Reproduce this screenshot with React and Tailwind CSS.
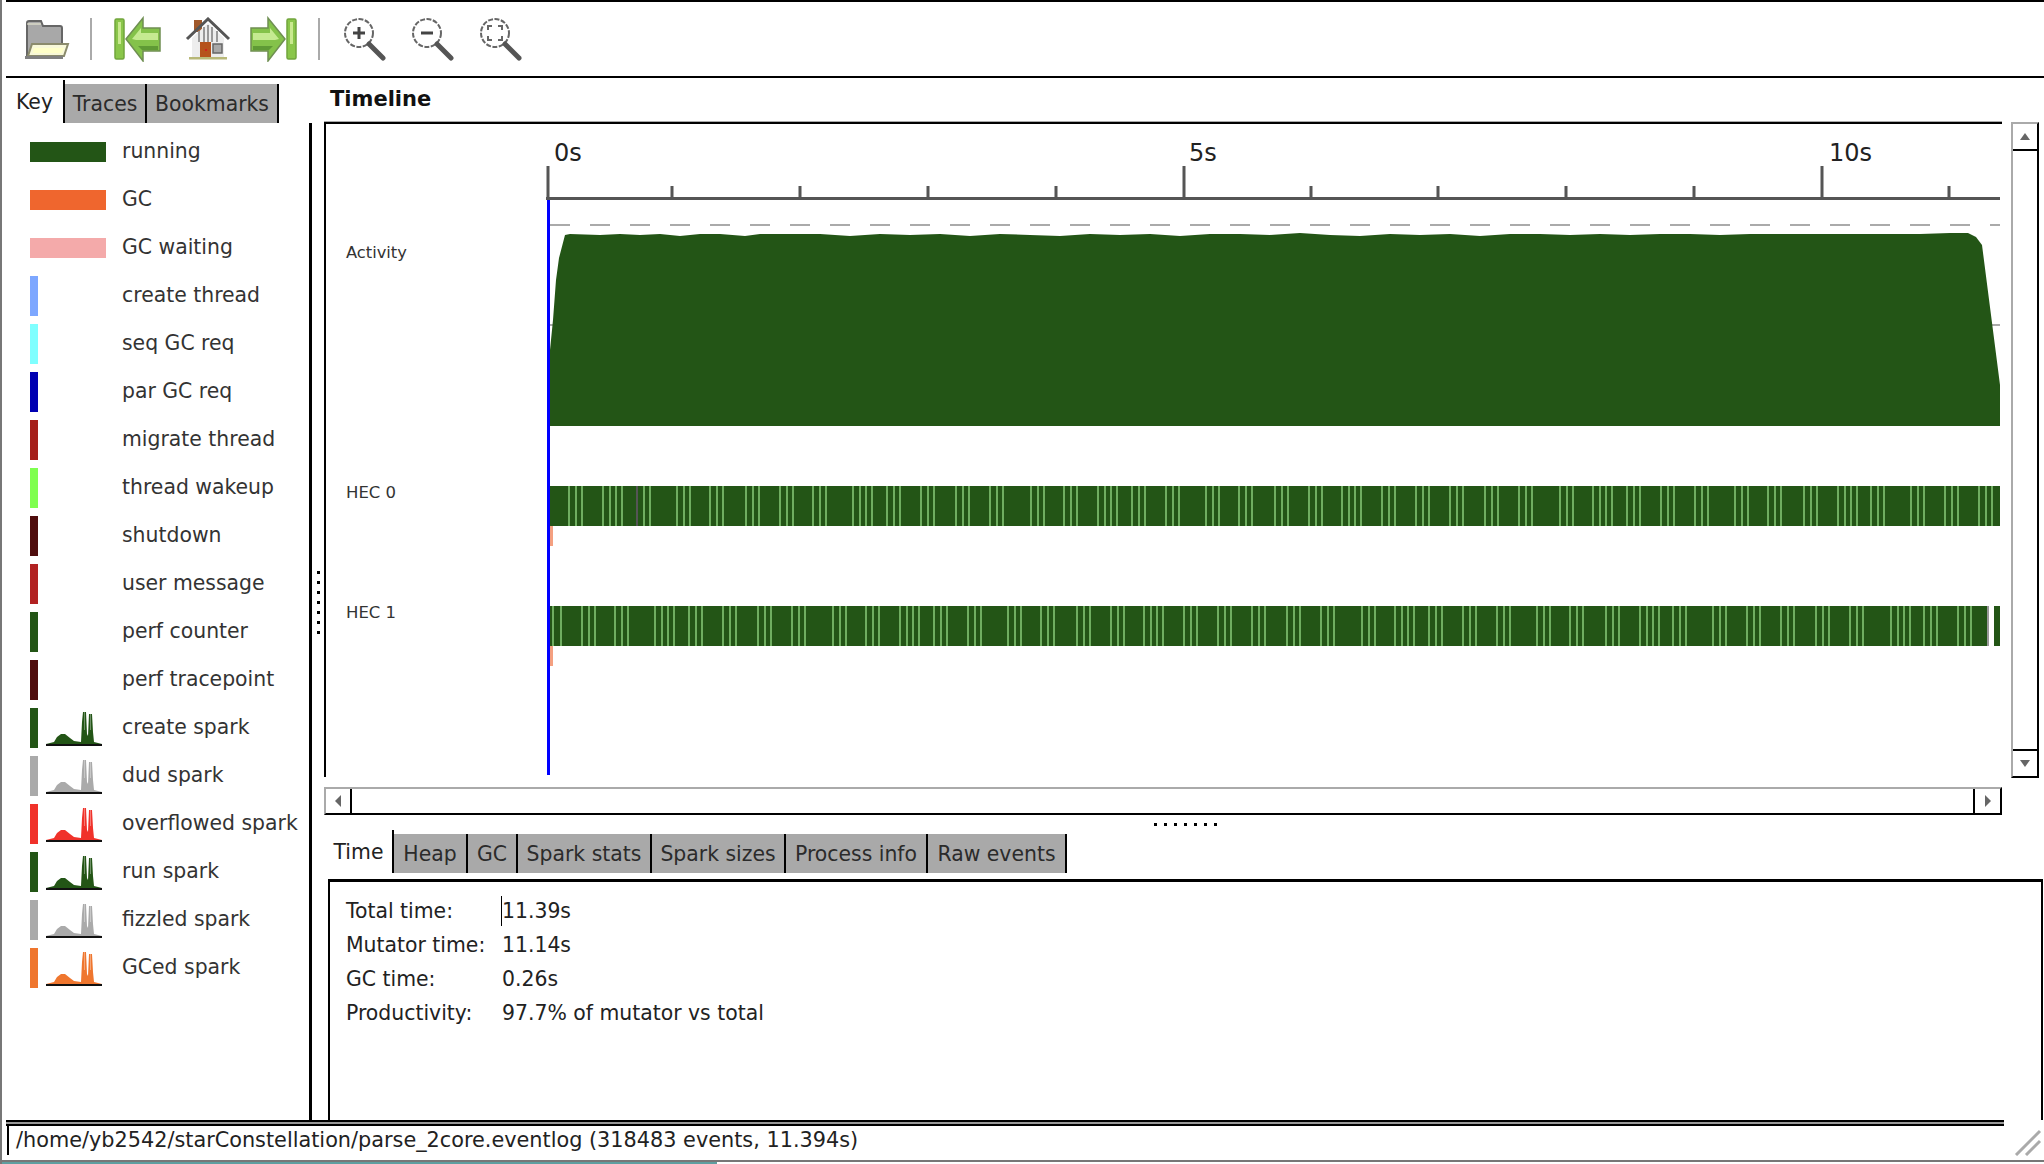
import React from 'react';

const FONT = { fontFamily: '"DejaVu Sans", sans-serif' };

const keyRows = [
  { label: 'running', color: '#235516', wide: true },
  { label: 'GC', color: '#ef662e', wide: true },
  { label: 'GC waiting', color: '#f4aaaa', wide: true },
  { label: 'create thread', color: '#7da7ff' },
  { label: 'seq GC req', color: '#7fffff' },
  { label: 'par GC req', color: '#0000b2' },
  { label: 'migrate thread', color: '#a51f1a' },
  { label: 'thread wakeup', color: '#7fff4f' },
  { label: 'shutdown', color: '#4f0d0d' },
  { label: 'user message', color: '#b22222' },
  { label: 'perf counter', color: '#235516' },
  { label: 'perf tracepoint', color: '#4f0d0d' },
  { label: 'create spark', color: '#235516', spark: true },
  { label: 'dud spark', color: '#aaaaaa', spark: true },
  { label: 'overflowed spark', color: '#f0322a', spark: true },
  { label: 'run spark', color: '#235516', spark: true },
  { label: 'fizzled spark', color: '#aaaaaa', spark: true },
  { label: 'GCed spark', color: '#ef762e', spark: true },
];

const detailTabs = [
  { label: 'Heap', width: 'w-[74px]' },
  { label: 'GC', width: 'w-[50px]' },
  { label: 'Spark stats', width: 'w-[134px]' },
  { label: 'Spark sizes', width: 'w-[134px]' },
  { label: 'Process info', width: 'w-[142px]' },
  { label: 'Raw events', width: 'w-[139px]' },
];

const stats = [
  ['Total time:', '11.39s'],
  ['Mutator time:', '11.14s'],
  ['GC time:', '0.26s'],
  ['Productivity:', '97.7% of mutator vs total'],
];

const minorTicks = [672, 800, 928, 1056, 1311, 1438, 1566, 1694, 1949];
const majorTicks = [548, 1184, 1822];

const gapCycle = [34, 34, 40, 33, 36, 34, 33, 40, 34, 34, 35, 34, 41, 33, 34];

// the GC pauses show up as little groups of light stripes along each HEC bar
const stripeGroups = (first, seed) => {
  const out = [];
  let x = first;
  let i = seed;
  while (x < 1998) {
    out.push(x, x + 7, x + 13);
    if (i % 7 === 1) out.push(x + 19);
    x += gapCycle[i % gapCycle.length];
    i += 1;
  }
  return out.filter((pos) => pos < 1998);
};

const hec0Stripes = stripeGroups(568, 0);
const hec1Stripes = [552, 560, ...stripeGroups(581, 6)];

const ActivityShape =
  'M550 426 L550 350 L553 320 L556 280 L559 258 L565 235 L570 234 L600 235 L620 234 L640 235 L660 234 L680 236 L700 234 L720 234 L745 236 L760 234 L790 234 L820 234 L850 236 L880 234 L910 235 L940 234 L970 236 L1000 234 L1030 235 L1060 236 L1090 234 L1120 235 L1150 234 L1180 236 L1210 234 L1240 234 L1270 235 L1300 233 L1330 235 L1360 236 L1390 234 L1420 235 L1450 234 L1480 236 L1510 234 L1540 234 L1570 235 L1600 234 L1630 235 L1660 234 L1690 234 L1720 235 L1750 234 L1780 234 L1810 234 L1840 234 L1880 234 L1920 234 L1950 233 L1968 233 L1976 237 L1982 245 L2000 385 L2000 426 Z';

const Tab = ({ label, active, width }) => (
  <div
    className={`${width} flex justify-center border-r-2 border-black text-[20.4px] ${
      active ? 'h-[43px] items-start pt-[7px] text-[#222]' : 'mt-[4px] h-[39px] items-center bg-[#a9a9a9] pt-[2px] text-[#2b2b2b]'
    }`}
  >
    {label}
  </div>
);

const Spark = ({ color }) => (
  <svg width="56" height="36" viewBox="0 0 56 36" className="ml-[8px]">
    <path
      d="M0 34 L8 32 L11 27 L15 24 L19 24 L24 28 L28 31 L35 32 L36 12 L37 2 L40 2 L41 24 L42 26 L43 4 L46 4 L47 22 L48 32 L56 34 Z"
      fill={color}
    />
    <path d="M38 2 L39 2 L39 20 L38 20 Z M44 4 L45 4 L45 20 L44 20 Z" fill="#ffffff" fillOpacity="0.35" />
    <rect x="0" y="34" width="56" height="2" fill="#111" />
  </svg>
);

const KeyRow = ({ label, color, wide, spark }) => (
  <div className="flex h-[40px] items-center">
    <div className="flex w-[92px] items-center">
      {wide ? (
        <div className="h-[20px] w-[76px]" style={{ backgroundColor: color }} />
      ) : (
        <div className="h-[40px] w-[8px]" style={{ backgroundColor: color }} />
      )}
      {spark && <Spark color={color} />}
    </div>
    <span className="whitespace-nowrap pb-[2px] text-[20.4px] leading-none text-[#333]">{label}</span>
  </div>
);

const FolderIcon = () => (
  <svg width="46" height="42" viewBox="0 0 46 42">
    <path d="M3 39 V5 Q3 3 5 3 H17 L19 8 H36 Q38 8 38 10 V39 Z" fill="#a8a8a8" stroke="#666" strokeWidth="2" />
    <path d="M3 6 H17" stroke="#f2f2d8" strokeWidth="1" />
    <path d="M8 26 H44 L40 38 H4 Z" fill="#f8f8d8" stroke="#8b8b6c" strokeWidth="2" />
    <path d="M10 30 H40 L38 35 H9 Z" fill="#ffffc8" />
    <rect x="1" y="38" width="38" height="3" fill="#808080" />
  </svg>
);

const ArrowIcon = ({ flip }) => (
  <svg width="48" height="46" viewBox="0 0 48 46" className={flip ? '-scale-x-100' : ''}>
    <rect x="1" y="3" width="9" height="40" rx="1.5" fill="#8ac64a" stroke="#71a53c" strokeWidth="1.5" />
    <rect x="4" y="6" width="3" height="22" fill="#c9e98f" />
    <path d="M12 23 L29 2 V12 H46 V35 H29 V45 Z" fill="#84c24a" stroke="#6f8f52" strokeWidth="1.5" />
    <path d="M18 23 L27 12 V17 H44 V24 H22 Z" fill="#c5ea91" />
    <path d="M24 30 H44 V34 H28 Z" fill="#5f9a35" />
  </svg>
);

const HomeIcon = () => (
  <svg width="46" height="44" viewBox="0 0 46 44">
    <rect x="9" y="3" width="8" height="12" fill="#a0582a" />
    <path d="M7 21 L23 6 L39 21 V40 H7 Z" fill="#ededed" />
    <path d="M2 22 L23 2 L44 22" fill="none" stroke="#555" strokeWidth="3" />
    <path d="M14 14 V25 M19 10 V25 M23 8 V25 M27 10 V25 M32 14 V25" stroke="#999" strokeWidth="2" />
    <rect x="15" y="25" width="11" height="16" fill="#b5521c" />
    <rect x="20" y="32" width="2" height="2" fill="#d02020" />
    <rect x="28" y="27" width="9" height="9" fill="#a8a8a8" stroke="#666" strokeWidth="1.5" />
    <rect x="4" y="40" width="38" height="2.5" fill="#b8b878" />
  </svg>
);

const LensIcon = ({ kind }) => (
  <svg width="44" height="44" viewBox="0 0 44 44">
    <circle cx="16" cy="16" r="14" fill="#fff" stroke="#666" strokeWidth="2" strokeDasharray="5 1.5" />
    <path d="M26 27 L40 41" stroke="#555" strokeWidth="5" strokeLinecap="round" />
    {kind === 'in' && <path d="M10 16 H22 M16 10 V22" stroke="#444" strokeWidth="3" />}
    {kind === 'out' && <path d="M10 16 H22" stroke="#444" strokeWidth="3" />}
    {kind === 'fit' && (
      <path d="M9 13 V9 H13 M19 9 H23 V13 M23 19 V23 H19 M13 23 H9 V19" fill="none" stroke="#666" strokeWidth="2" />
    )}
  </svg>
);

const Timeline = () => (
  <svg width="1676" height="653" viewBox="326 124 1676 653" className="block" style={FONT}>
    {/* axis */}
    <rect x="546" y="197" width="1454" height="3" fill="#555" />
    {majorTicks.map((x) => (
      <rect key={x} x={x - 1.5} y="166" width="3" height="32" fill="#555" />
    ))}
    {minorTicks.map((x) => (
      <rect key={x} x={x - 1.5} y="186" width="3" height="12" fill="#555" />
    ))}
    <text x="554" y="161" fontSize="24" fill="#222">0s</text>
    <text x="1189" y="161" fontSize="24" fill="#222">5s</text>
    <text x="1829" y="161" fontSize="24" fill="#222">10s</text>

    {/* activity */}
    <path d="M550 225 H2000" stroke="#aaa" strokeWidth="2" strokeDasharray="20 20" />
    <path d="M550 325 H556 M1992 325 H2000" stroke="#aaa" strokeWidth="2" />
    <path d={ActivityShape} fill="#235516" />
    <text x="346" y="258" fontSize="16.3" fill="#333">Activity</text>

    {/* HEC bars */}
    <text x="346" y="498" fontSize="16.5" fill="#333">HEC 0</text>
    <rect x="550" y="486" width="1450" height="40" fill="#235516" />
    {hec0Stripes.map((x, i) => (
      <rect key={i} x={x} y="486" width="2" height="40" fill="#6fae60" />
    ))}
    <rect x="636" y="486" width="2" height="40" fill="#555" />
    <rect x="550" y="526" width="3" height="20" fill="#f4a080" />

    <text x="346" y="618" fontSize="16.5" fill="#333">HEC 1</text>
    <rect x="550" y="606" width="1450" height="40" fill="#235516" />
    {hec1Stripes.map((x, i) => (
      <rect key={i} x={x} y="606" width="2" height="40" fill="#6fae60" />
    ))}
    <rect x="1988" y="606" width="6" height="40" fill="#fff" />
    <rect x="1987" y="606" width="2" height="40" fill="#999" />
    <rect x="550" y="646" width="3" height="20" fill="#f4a080" />

    <rect x="547" y="200" width="3" height="575" fill="#0000ff" />
  </svg>
);

const ArrowButton = ({ dir, className }) => {
  const points = {
    up: '7,11 17,11 12,4',
    down: '7,4 17,4 12,11',
    left: '9,8 15,2 15,14',
    right: '15,8 9,2 9,14',
  };
  return (
    <div className={`flex items-center justify-center bg-white ${className}`}>
      <svg width="24" height="16" viewBox="0 0 24 16">
        <polygon points={points[dir]} fill="#666" />
      </svg>
    </div>
  );
};

const App = () => (
  <div className="flex h-[1164px] w-[2044px] flex-col overflow-hidden border-l-2 border-[#777] bg-white" style={FONT}>
    {/* toolbar */}
    <div className="ml-[4px] flex h-[78px] shrink-0 items-center border-y-2 border-black">
      <div className="ml-[18px]"><FolderIcon /></div>
      <div className="ml-[20px] h-[42px] w-[2px] bg-[#aaa]" />
      <div className="ml-[22px]"><ArrowIcon /></div>
      <div className="ml-[23px]"><HomeIcon /></div>
      <div className="ml-[18px]"><ArrowIcon flip /></div>
      <div className="ml-[21px] h-[42px] w-[2px] bg-[#aaa]" />
      <div className="ml-[23px]"><LensIcon kind="in" /></div>
      <div className="ml-[24px]"><LensIcon kind="out" /></div>
      <div className="ml-[24px]"><LensIcon kind="fit" /></div>
    </div>

    <div className="flex min-h-0 flex-1">
      {/* key pane */}
      <div className="flex w-[310px] shrink-0 flex-col">
        <div className="ml-[4px] flex h-[45px] shrink-0 pt-[2px]">
          <Tab label="Key" active width="w-[59px]" />
          <Tab label="Traces" width="w-[82px]" />
          <Tab label="Bookmarks" width="w-[132px]" />
        </div>
        <div className="flex-1 border-r-[3px] border-black pl-[28px] pt-[9px]">
          {keyRows.map((row) => (
            <div key={row.label} className="mb-[8px]">
              <KeyRow {...row} />
            </div>
          ))}
        </div>
      </div>

      {/* pane handle */}
      <div className="flex w-[12px] shrink-0 flex-col items-center gap-[7px] pt-[493px]">
        {[0, 1, 2, 3, 4, 5, 6].map((n) => (
          <span key={n} className="h-[3px] w-[3px] bg-black" />
        ))}
      </div>

      {/* timeline and details */}
      <div className="flex min-w-0 flex-1 flex-col">
        <div className="flex h-[44px] shrink-0 items-center pl-[6px] text-[21px] font-bold text-[#111]">Timeline</div>
        <div className="flex h-[655px] shrink-0 gap-[9px]">
          <div className="h-[655px] w-[1678px] border-l-2 border-t-2 border-black shadow-[0_-1px_0_#aaa]">
            <Timeline />
          </div>
          <div className="flex h-[656px] w-[28px] flex-col justify-between border-y-2 border-l-2 border-r-2 border-b-black border-l-[#aaa] border-r-black border-t-[#aaa]">
            <ArrowButton dir="up" className="h-[27px] border-b-2 border-black" />
            <ArrowButton dir="down" className="h-[27px] border-t-2 border-black" />
          </div>
        </div>
        <div className="mt-[10px] flex h-[28px] w-[1678px] shrink-0 justify-between border-y-2 border-l-2 border-r-2 border-b-black border-l-[#aaa] border-r-black border-t-[#aaa]">
          <ArrowButton dir="left" className="w-[26px] border-r-2 border-black" />
          <ArrowButton dir="right" className="w-[27px] border-l-2 border-black" />
        </div>
        <div className="flex h-[19px] shrink-0 items-center gap-[7px] pl-[830px]">
          {[0, 1, 2, 3, 4, 5, 6].map((n) => (
            <span key={n} className="h-[3px] w-[3px] bg-black" />
          ))}
        </div>
        <div className="-mt-[4px] ml-[1px] flex h-[43px] shrink-0">
          <Tab label="Time" active width="w-[69px]" />
          {detailTabs.map((tab) => (
            <Tab key={tab.label} label={tab.label} width={tab.width} />
          ))}
        </div>
        <div className="ml-[4px] mr-[1px] mt-[6px] flex-1 border-x-2 border-t-[3px] border-black pl-[16px] pt-[12px] text-[20.4px] text-[#222]">
          {stats.map(([name, value], i) => (
            <div key={name} className="flex h-[34.2px] items-center whitespace-nowrap">
              <span className="w-[156px]">{name}</span>
              <span className={i === 0 ? '-ml-[1px] border-l-[1px] border-black' : ''}>{value}</span>
            </div>
          ))}
        </div>
      </div>
    </div>

    {/* status bar */}
    <div className="flex h-[44px] shrink-0 flex-col">
      <div className="ml-[4px] h-[6px] w-[1998px] shrink-0 border-y-2 border-black bg-[#999]" />
      <div className="flex flex-1 items-start justify-between">
        <div className="ml-[5px] flex h-[29px] items-center whitespace-nowrap border-l-2 border-black pl-[7px] text-[20.8px] text-[#222]">
          /home/yb2542/starConstellation/parse_2core.eventlog (318483 events, 11.394s)
        </div>
        <svg width="28" height="28" viewBox="0 0 28 28" className="mr-[2px] mt-[2px]">
          <path d="M2 27 L26 3 M12 27 L26 13" stroke="#aaa" strokeWidth="3" />
        </svg>
      </div>
      <div className="h-[2px] shrink-0 bg-[#777]" />
      <div className="h-[2px] w-[715px] shrink-0 bg-[#5f9ea0]" />
    </div>
  </div>
);

export default App;
